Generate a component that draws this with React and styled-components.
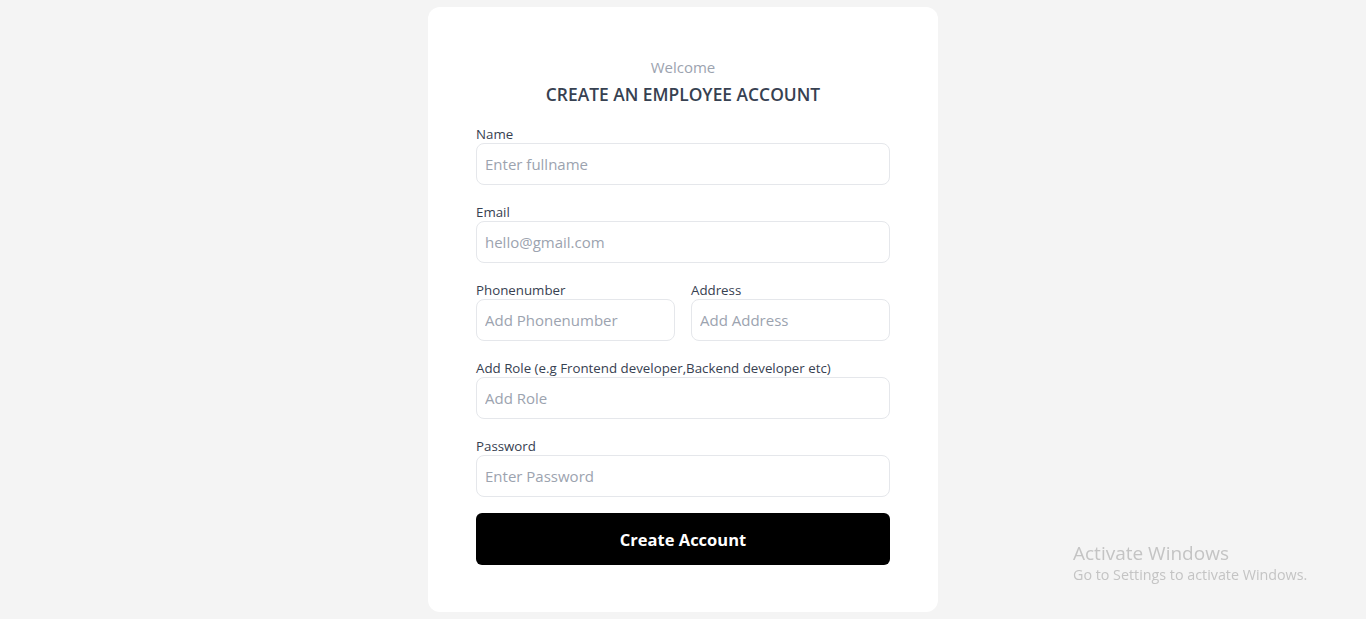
import React from 'react';
import styled, { createGlobalStyle } from 'styled-components';

const Global = createGlobalStyle`
    * { box-sizing: border-box; }
    body {
        margin: 0;
        background: #f4f4f4;
        font-family: "Open Sans", "Noto Sans", Arial, sans-serif;
    }
`

const Page = styled.div`
    min-height: 619px;
    display: flex;
    justify-content: center;
    align-items: flex-start;
    padding-top: 7px;
`
const Card = styled.form`
    width: 510px;
    background: #ffffff;
    border-radius: 12px;
    padding: 50px 48px 47px;
    display: flex;
    flex-direction: column;
    gap: 18px;
`
const Head = styled.div`
    text-align: center;
    margin-bottom: 1px;
`
const Welcome = styled.div`
    font-size: 15px;
    line-height: 20px;
    color: #9ca3af;
`
const Title = styled.h1`
    margin: 5px 0 0;
    font-size: 17.4px;
    line-height: 24px;
    font-weight: 600;
    color: #374151;
`
const Row = styled.div`
    display: grid;
    grid-template-columns: 1fr 1fr;
    gap: 16px;
`
const Field = styled.div`
    display: flex;
    flex-direction: column;
`
const Label = styled.label`
    font-size: 13.3px;
    line-height: 18px;
    color: #374151;
`
const Input = styled.input`
    height: 42px;
    width: 100%;
    border: 1px solid #e5e7eb;
    border-radius: 8px;
    padding: 0 8px;
    font-family: inherit;
    font-size: 15px;
    color: #374151;
    outline: none;
    &::placeholder { color: #9ca3af; }
`
const Button = styled.button`
    margin-top: -2px;
    height: 52px;
    width: 100%;
    border: none;
    border-radius: 6px;
    background: #000000;
    color: #ffffff;
    font-family: inherit;
    font-size: 16.5px;
    font-weight: 700;
    cursor: pointer;
`
const Watermark = styled.div`
    position: fixed;
    left: 1073px;
    top: 541px;
    color: #c4c4c4;
    font-family: "Open Sans", "Noto Sans", sans-serif;
`
const WmTitle = styled.div`
    font-size: 19px;
    line-height: 24px;
`
const WmText = styled.div`
    font-size: 14.3px;
    line-height: 20px;
`

const App = () => {
    return (
        <Page>
            <Global />
            <Card onSubmit={e => e.preventDefault()}>
                <Head>
                    <Welcome>Welcome</Welcome>
                    <Title>CREATE AN EMPLOYEE ACCOUNT</Title>
                </Head>
                <Field>
                    <Label>Name</Label>
                    <Input placeholder="Enter fullname" />
                </Field>
                <Field>
                    <Label>Email</Label>
                    <Input placeholder="hello@gmail.com" />
                </Field>
                <Row>
                    <Field>
                        <Label>Phonenumber</Label>
                        <Input placeholder="Add Phonenumber" />
                    </Field>
                    <Field>
                        <Label>Address</Label>
                        <Input placeholder="Add Address" />
                    </Field>
                </Row>
                <Field>
                    <Label>Add Role (e.g Frontend developer,Backend developer etc)</Label>
                    <Input placeholder="Add Role" />
                </Field>
                <Field>
                    <Label>Password</Label>
                    <Input type="password" placeholder="Enter Password" />
                </Field>
                <Button type="submit">Create Account</Button>
            </Card>
            <Watermark>
                <WmTitle>Activate Windows</WmTitle>
                <WmText>Go to Settings to activate Windows.</WmText>
            </Watermark>
        </Page>
    )
}

export default App
